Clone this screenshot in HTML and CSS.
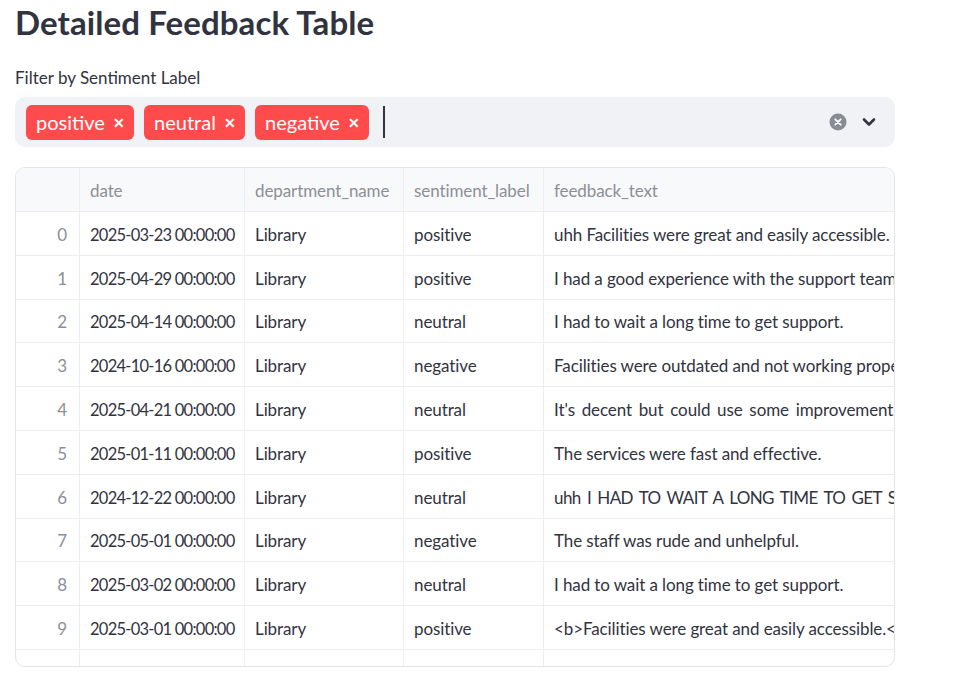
FILE: index.html
```html
<!DOCTYPE html>
<html lang="en">
<head>
<meta charset="utf-8">
<title>Detailed Feedback Table</title>
<link rel="stylesheet" href="styles.css">
</head>
<body>
<main class="page">
  <h3 class="title">Detailed Feedback Table</h3>

  <div class="field">
    <label class="field-label">Filter by Sentiment Label</label>
    <div class="select">
      <div class="chips">
        <span class="chip">positive <span class="chip-x">✕</span></span>
        <span class="chip">neutral <span class="chip-x">✕</span></span>
        <span class="chip">negative <span class="chip-x">✕</span></span>
        <span class="cursor"></span>
      </div>
      <div class="select-icons">
        <svg class="clear-icon" width="18" height="18" viewBox="0 0 18 18">
          <circle cx="9" cy="9" r="8.5" fill="#8a8c95"/>
          <path d="M6.3 6.3 L11.7 11.7 M11.7 6.3 L6.3 11.7" stroke="#ffffff" stroke-width="1.8" stroke-linecap="round"/>
        </svg>
        <svg class="chevron" width="16" height="16" viewBox="0 0 16 16">
          <path d="M3 5.5 L8 10.5 L13 5.5" fill="none" stroke="#31333f" stroke-width="2.6" stroke-linecap="round" stroke-linejoin="round"/>
        </svg>
      </div>
    </div>
  </div>

  <div class="grid-wrap">
    <div class="grid">
      <div class="row head">
        <div class="c idx"></div>
        <div class="c">date</div>
        <div class="c">department_name</div>
        <div class="c">sentiment_label</div>
        <div class="c">feedback_text</div>
      </div>
      <div class="row"><div class="c idx">0</div><div class="c date">2025-03-23 00:00:00</div><div class="c">Library</div><div class="c">positive</div><div class="c">uhh Facilities were great and easily accessible.</div></div>
      <div class="row"><div class="c idx">1</div><div class="c date">2025-04-29 00:00:00</div><div class="c">Library</div><div class="c">positive</div><div class="c">I had a good experience with the support team.</div></div>
      <div class="row"><div class="c idx">2</div><div class="c date">2025-04-14 00:00:00</div><div class="c">Library</div><div class="c">neutral</div><div class="c">I had to wait a long time to get support.</div></div>
      <div class="row"><div class="c idx">3</div><div class="c date">2024-10-16 00:00:00</div><div class="c">Library</div><div class="c">negative</div><div class="c">Facilities were outdated and not working properly.</div></div>
      <div class="row"><div class="c idx">4</div><div class="c date">2025-04-21 00:00:00</div><div class="c">Library</div><div class="c">neutral</div><div class="c wide">It's decent but could use some improvements.</div></div>
      <div class="row"><div class="c idx">5</div><div class="c date">2025-01-11 00:00:00</div><div class="c">Library</div><div class="c">positive</div><div class="c">The services were fast and effective.</div></div>
      <div class="row"><div class="c idx">6</div><div class="c date">2024-12-22 00:00:00</div><div class="c">Library</div><div class="c">neutral</div><div class="c wide caps">uhh I HAD TO WAIT A LONG TIME TO GET SUPPORT.</div></div>
      <div class="row"><div class="c idx">7</div><div class="c date">2025-05-01 00:00:00</div><div class="c">Library</div><div class="c">negative</div><div class="c">The staff was rude and unhelpful.</div></div>
      <div class="row"><div class="c idx">8</div><div class="c date">2025-03-02 00:00:00</div><div class="c">Library</div><div class="c">neutral</div><div class="c">I had to wait a long time to get support.</div></div>
      <div class="row"><div class="c idx">9</div><div class="c date">2025-03-01 00:00:00</div><div class="c">Library</div><div class="c">positive</div><div class="c">&lt;b&gt;Facilities were great and easily accessible.&lt;/b&gt;</div></div>
      <div class="row"><div class="c idx">10</div><div class="c date">2025-02-17 00:00:00</div><div class="c">Library</div><div class="c">negative</div><div class="c">uhh The staff was rude and unhelpful.</div></div>
    </div>
  </div>
</main>
</body>
</html>
```

FILE: styles.css
```css
* { box-sizing: border-box; }

html, body {
  margin: 0;
  padding: 0;
  background: #ffffff;
}

body {
  font-family: Lato, "Noto Sans", "Liberation Sans", sans-serif;
  color: #31333f;
}

.page {
  padding: 0 67px 0 15px;
  display: flex;
  flex-direction: column;
}

.title {
  margin: 0;
  padding-top: 2px;
  font-size: 33px;
  line-height: 40px;
  font-weight: 700;
  color: #31333f;
  letter-spacing: 0.1px;
}

.field {
  margin-top: 25px;
  display: flex;
  flex-direction: column;
  gap: 8px;
}

.field-label {
  font-size: 17px;
  line-height: 22px;
}

.select {
  height: 50px;
  background: #f0f2f6;
  border-radius: 10px;
  display: flex;
  align-items: center;
  justify-content: space-between;
  padding: 0 18px 0 11px;
}

.chips {
  display: flex;
  align-items: center;
  gap: 10px;
}

.chip {
  height: 35px;
  background: #ff4b4b;
  color: #ffffff;
  border-radius: 6px;
  display: inline-flex;
  align-items: center;
  padding: 0 9px 0 10px;
  font-size: 20px;
  white-space: pre;
}

.chip-x {
  font-size: 14px;
  font-weight: 700;
  margin-left: 3px;
}

.cursor {
  width: 1.5px;
  height: 32px;
  background: #31333f;
  margin-left: 4px;
}

.select-icons {
  display: flex;
  align-items: center;
  gap: 14px;
}

.grid-wrap {
  margin-top: 20px;
  height: 500px;
  border: 1px solid #e4e5e9;
  border-radius: 10px;
  overflow: hidden;
}

.grid {
  display: flex;
  flex-direction: column;
}

.row {
  display: grid;
  grid-template-columns: 64px 165px 159px 140px 420px;
  height: 43.8px;
  flex-shrink: 0;
  border-bottom: 1px solid #ededf0;
}

.row.head {
  background: #f8f9fb;
  height: 44px;
}

.c {
  padding: 3px 10px 0;
  font-size: 17px;
  line-height: 20px;
  letter-spacing: -0.1px;
  display: flex;
  align-items: center;
  white-space: nowrap;
  overflow: hidden;
  border-right: 1px solid #ededf0;
  color: #31333f;
}

.head .c {
  color: #8d8f98;
}

.c.idx {
  justify-content: flex-end;
  padding-right: 12px;
  color: #8d8f98;
}

.c.date {
  font-size: 16.5px;
  letter-spacing: -0.75px;
}

.c.wide {
  word-spacing: 2.5px;
}

.c.caps {
  letter-spacing: -0.6px;
}

.row:last-child .c {
  align-items: flex-start;
  padding-top: 13px;
}
```
